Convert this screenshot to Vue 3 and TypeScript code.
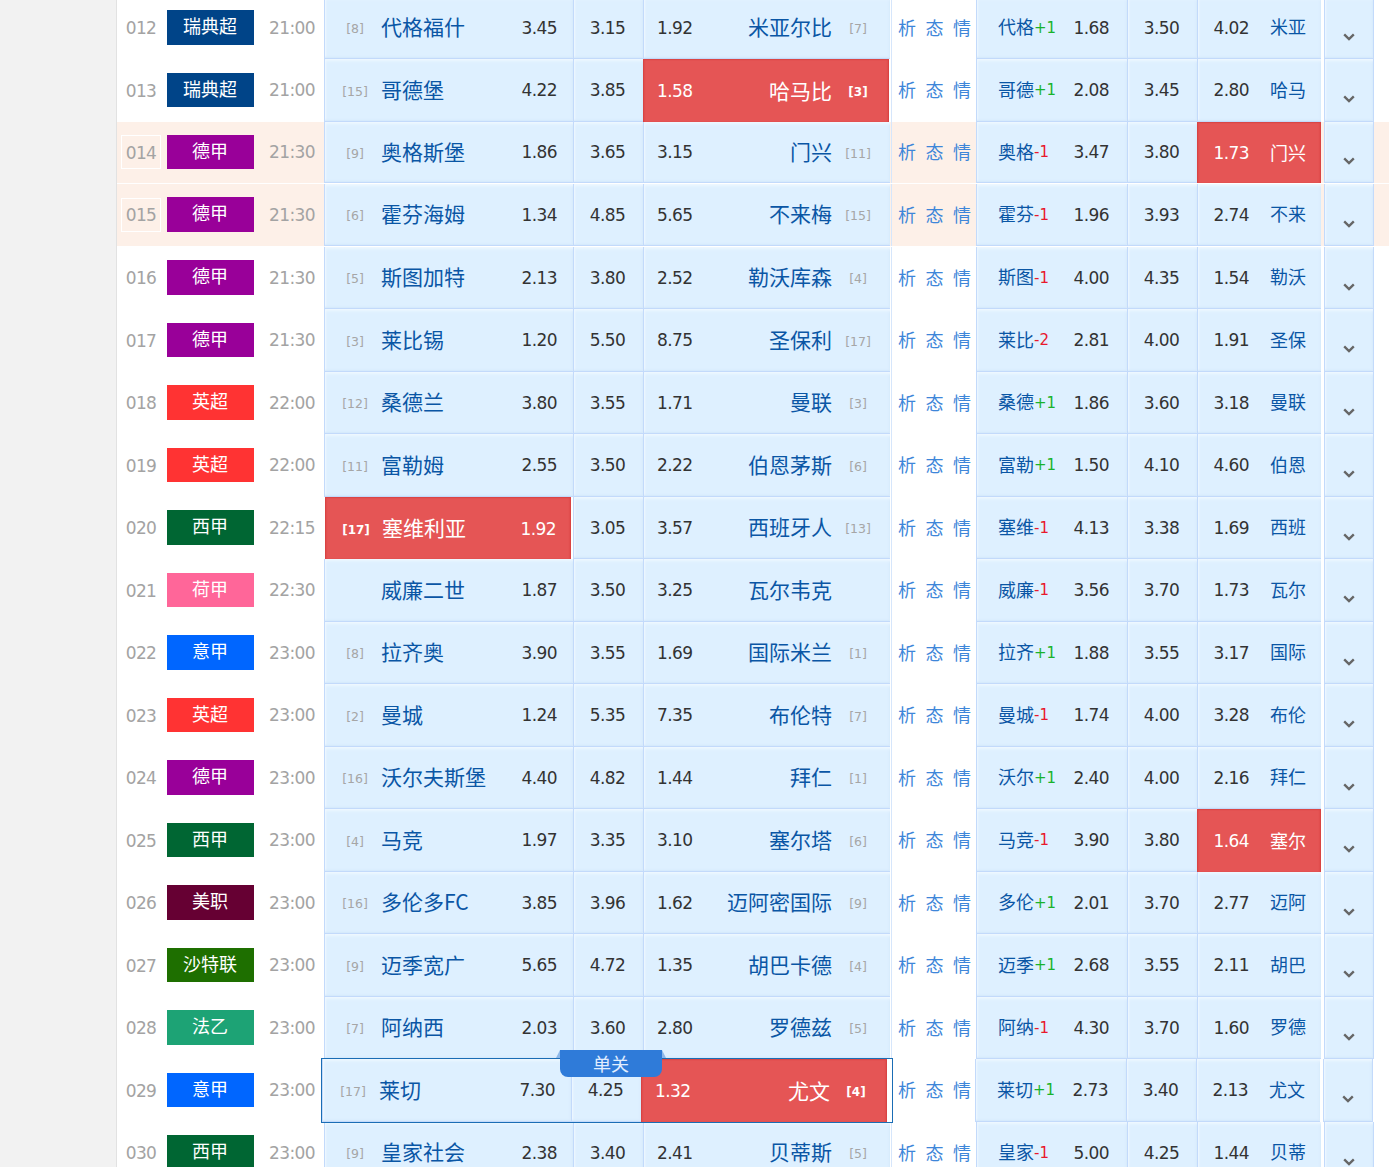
<script setup lang="ts">
type Hi = '' | 'home' | 'away' | 'hc'
interface Match {
  no: string; league: string; time: string
  hr: string; home: string; w: string; d: string; l: string; away: string; ar: string
  hn: string; hv: string; a: string; b: string; c: string; an: string
  hi: Hi; hot?: boolean; sel?: boolean
}
const colors: Record<string, string> = {
  瑞典超: '#004488', 德甲: '#990099', 英超: '#ff3333', 西甲: '#006633', 荷甲: '#ff6699',
  意甲: '#0066ff', 美职: '#660033', 沙特联: '#1e6f00', 法乙: '#1da375'
}
const raw = `012,瑞典超,21:00,8,代格福什,3.45,3.15,1.92,米亚尔比,7,代格,+1,1.68,3.50,4.02,米亚,
013,瑞典超,21:00,15,哥德堡,4.22,3.85,1.58,哈马比,3,哥德,+1,2.08,3.45,2.80,哈马,away
014,德甲,21:30,9,奥格斯堡,1.86,3.65,3.15,门兴,11,奥格,-1,3.47,3.80,1.73,门兴,hc
015,德甲,21:30,6,霍芬海姆,1.34,4.85,5.65,不来梅,15,霍芬,-1,1.96,3.93,2.74,不来,
016,德甲,21:30,5,斯图加特,2.13,3.80,2.52,勒沃库森,4,斯图,-1,4.00,4.35,1.54,勒沃,
017,德甲,21:30,3,莱比锡,1.20,5.50,8.75,圣保利,17,莱比,-2,2.81,4.00,1.91,圣保,
018,英超,22:00,12,桑德兰,3.80,3.55,1.71,曼联,3,桑德,+1,1.86,3.60,3.18,曼联,
019,英超,22:00,11,富勒姆,2.55,3.50,2.22,伯恩茅斯,6,富勒,+1,1.50,4.10,4.60,伯恩,
020,西甲,22:15,17,塞维利亚,1.92,3.05,3.57,西班牙人,13,塞维,-1,4.13,3.38,1.69,西班,home
021,荷甲,22:30,,威廉二世,1.87,3.50,3.25,瓦尔韦克,,威廉,-1,3.56,3.70,1.73,瓦尔,
022,意甲,23:00,8,拉齐奥,3.90,3.55,1.69,国际米兰,1,拉齐,+1,1.88,3.55,3.17,国际,
023,英超,23:00,2,曼城,1.24,5.35,7.35,布伦特,7,曼城,-1,1.74,4.00,3.28,布伦,
024,德甲,23:00,16,沃尔夫斯堡,4.40,4.82,1.44,拜仁,1,沃尔,+1,2.40,4.00,2.16,拜仁,
025,西甲,23:00,4,马竞,1.97,3.35,3.10,塞尔塔,6,马竞,-1,3.90,3.80,1.64,塞尔,hc
026,美职,23:00,16,多伦多FC,3.85,3.96,1.62,迈阿密国际,9,多伦,+1,2.01,3.70,2.77,迈阿,
027,沙特联,23:00,9,迈季宽广,5.65,4.72,1.35,胡巴卡德,4,迈季,+1,2.68,3.55,2.11,胡巴,
028,法乙,23:00,7,阿纳西,2.03,3.60,2.80,罗德兹,5,阿纳,-1,4.30,3.70,1.60,罗德,
029,意甲,23:00,17,莱切,7.30,4.25,1.32,尤文,4,莱切,+1,2.73,3.40,2.13,尤文,away
030,西甲,23:00,9,皇家社会,2.38,3.40,2.41,贝蒂斯,5,皇家,-1,5.00,4.25,1.44,贝蒂,`
const rows: Match[] = raw.split('\n').map((line) => {
  const p = line.trim().split(',')
  return {
    no: p[0], league: p[1], time: p[2], hr: p[3] ? `[${p[3]}]` : '', home: p[4], w: p[5], d: p[6], l: p[7],
    away: p[8], ar: p[9] ? `[${p[9]}]` : '', hn: p[10], hv: p[11], a: p[12], b: p[13], c: p[14], an: p[15],
    hi: p[16] as Hi, hot: p[0] === '014' || p[0] === '015', sel: p[0] === '029'
  }
})
</script>

<template>
  <div class="page">
    <div class="sheet">
      <div v-for="r in rows" :key="r.no" class="row" :class="{ hot: r.hot, sel: r.sel }">
        <div class="meta">
          <span class="num">{{ r.no }}</span>
          <span class="league" :style="{ background: colors[r.league] }">{{ r.league }}</span>
          <span class="time">{{ r.time }}</span>
        </div>
        <div class="match">
          <div class="cell home" :class="{ red: r.hi === 'home' }">
            <span class="rank">{{ r.hr }}</span>
            <span class="name">{{ r.home }}</span>
            <span class="odd">{{ r.w }}</span>
          </div>
          <div class="cell draw"><span class="odd">{{ r.d }}</span></div>
          <div class="cell away" :class="{ red: r.hi === 'away' }">
            <span class="odd">{{ r.l }}</span>
            <span class="name right">{{ r.away }}</span>
            <span class="rank">{{ r.ar }}</span>
          </div>
          <template v-if="r.sel">
            <i class="ear left"></i>
            <i class="ear right-ear"></i>
            <span class="badge">单关</span>
          </template>
        </div>
        <div class="info"><a>析</a><a>态</a><a>情</a></div>
        <div class="cell hc1">
          <span class="short">{{ r.hn }}</span><span class="hv" :class="r.hv[0] === '+' ? 'plus' : 'minus'">{{ r.hv }}</span>
          <span class="odd push">{{ r.a }}</span>
        </div>
        <div class="cell hc2"><span class="odd">{{ r.b }}</span></div>
        <div class="cell hc3" :class="{ red: r.hi === 'hc' }">
          <span class="odd">{{ r.c }}</span>
          <span class="short">{{ r.an }}</span>
        </div>
        <div class="cell more">
          <svg width="12" height="8" viewBox="0 0 12 8" aria-hidden="true">
            <polyline points="1.2,1.4 6,6 10.8,1.4" fill="none" stroke="#666" stroke-width="2.4" />
          </svg>
        </div>
      </div>
    </div>
  </div>
</template>

<style>
html, body { margin: 0; background: #fff; }
</style>

<style scoped>
.page {
  height: 1167px;
  overflow: hidden;
  padding-left: 116px;
  background: #f2f2f2;
  box-sizing: border-box;
  font-family: "DejaVu Sans", "Noto Sans CJK SC", sans-serif;
}
.sheet {
  height: 1167px;
  background: #fff;
  border-left: 1px solid #e2e2e2;
  overflow: hidden;
}
.row {
  display: flex;
  height: 62.5px;
  box-sizing: border-box;
  position: relative;
}
.row:first-child { margin-top: -3.5px; }
.row.hot { background: #fdf0e8; border-bottom: 1px solid #fff; }
.meta {
  width: 207px;
  flex: none;
  display: flex;
  align-items: center;
  padding-left: 4px;
  box-sizing: border-box;
}
.num {
  width: 40px;
  height: 34px;
  box-sizing: border-box;
  border: 1px solid transparent;
  display: flex;
  align-items: center;
  justify-content: center;
  font-size: 17px;
  letter-spacing: -0.7px;
  color: #a3a3a3;
  padding-top: 1px;
}
.hot .num { border-color: #fff; }
.league {
  width: 87px;
  height: 34.5px;
  margin: 0 0 0.5px 6px;
  display: flex;
  align-items: center;
  justify-content: center;
  padding: 0 1px 5px 0;
  box-sizing: border-box;
  color: #fff;
  font: 18px "Noto Sans CJK SC", sans-serif;
}
.time {
  margin-left: 15px;
  font-size: 17px;
  letter-spacing: -0.6px;
  color: #a3a3a3;
  padding-bottom: 0;
}
.match { display: flex; flex: none; position: relative; }
.cell {
  box-sizing: border-box;
  height: 100%;
  background: #def0ff;
  border: 1px solid #c3dafb;
  border-top: 0;
  border-right: 0;
  box-shadow: inset 0 3px 3px -1px #eff8ff, inset -2px -2px 2px -1px #d3e8fb, inset 2px 0 2px -1px #eff8ff;
  display: flex;
  align-items: center;
  font-size: 17px;
  letter-spacing: -0.6px;
  color: #333;
}
.odd { padding-top: 1px; }
.home { width: 249px; padding: 0 16px 0 5px; }
.draw { width: 70px; justify-content: center; padding-right: 2px; }
.away { width: 247px; margin-right: 1px; padding: 0 7px 0 13px; }
.rank {
  width: 50px;
  flex: none;
  text-align: center;
  font-size: 12.5px;
  letter-spacing: 0;
  color: #a6a6a6;
  padding-top: 3px;
}
.name {
  flex: 1;
  margin-left: 1px;
  padding-bottom: 2px;
  font: 21px "Noto Sans CJK SC", sans-serif;
  letter-spacing: 0;
  color: #0a56a5;
  white-space: nowrap;
}
.name.right { text-align: right; margin: 0 1px 0 0; }
.info {
  width: 85px;
  flex: none;
  box-sizing: border-box;
  border-left: 1px solid #d6e6fb;
  padding-left: 6px;
  display: flex;
  gap: 10px;
  align-items: center;
  font: 18px "Noto Sans CJK SC", sans-serif;
  color: #3e86d9;
}
.info a { width: 17.5px; padding-bottom: 2px; }
.hc1 { width: 151px; padding: 0 18px 0 21px; }
.hc2 { width: 70px; justify-content: center; padding-right: 2px; }
.hc3 { width: 124px; margin-right: 3px; justify-content: flex-end; gap: 21px; padding-right: 15px; }
.more { width: 50px; justify-content: center; padding-top: 19px; border-right: 1px solid #c3dafb; }
.short {
  font: 18px "Noto Sans CJK SC", sans-serif;
  letter-spacing: 0;
  color: #0a56a5;
  padding-bottom: 2px;
}
.hv { font-size: 15px; letter-spacing: 0; padding-top: 1px; }
.plus { color: #19b32b; }
.minus { color: #e8182c; }
.push { margin-left: auto; }
.red {
  background: #e55555;
  border: 0;
  border-top: 1px solid #d94646;
  box-shadow: inset 2px 0 2px -1px #d63e3e, inset -2px 0 2px -1px #d63e3e;
  color: #fff;
}
.red .name, .red .short { color: #fff; }
.red .rank { color: #fff; font-weight: bold; font-size: 12px; }
.away.red { width: 246px; margin-right: 2px; padding-left: 14px; padding-right: 6px; }
.home.red { padding-left: 6px; padding-right: 15px; width: 246px; margin-left: 1px; margin-right: 2px; }
.sel .match { margin-left: -2px; margin-right: 2px; z-index: 2; }
.sel .match::after {
  content: "";
  position: absolute;
  left: -1px;
  right: -4px;
  top: -1px;
  bottom: -1px;
  border: 1px solid #1a6db5;
  pointer-events: none;
}
.sel .info { margin-left: 1px; border-left: 0; }
.sel .hc1 { margin-left: -2px; }
.badge {
  position: absolute;
  left: 238px;
  top: -9px;
  width: 102px;
  height: 27px;
  padding-bottom: 2px;
  box-sizing: border-box;
  border-radius: 0 0 8px 8px;
  background: #2f7bd9;
  color: #e2eeff;
  font: 18px "Noto Sans CJK SC", sans-serif;
  text-align: center;
  line-height: 26px;
  z-index: 3;
}
.ear {
  position: absolute;
  top: -9px;
  width: 0;
  height: 0;
  border-bottom: 8px solid #8db8ea;
  z-index: 3;
}
.ear.left { left: 234px; border-left: 4px solid transparent; }
.ear.right-ear { left: 340px; border-right: 4px solid transparent; }
</style>
